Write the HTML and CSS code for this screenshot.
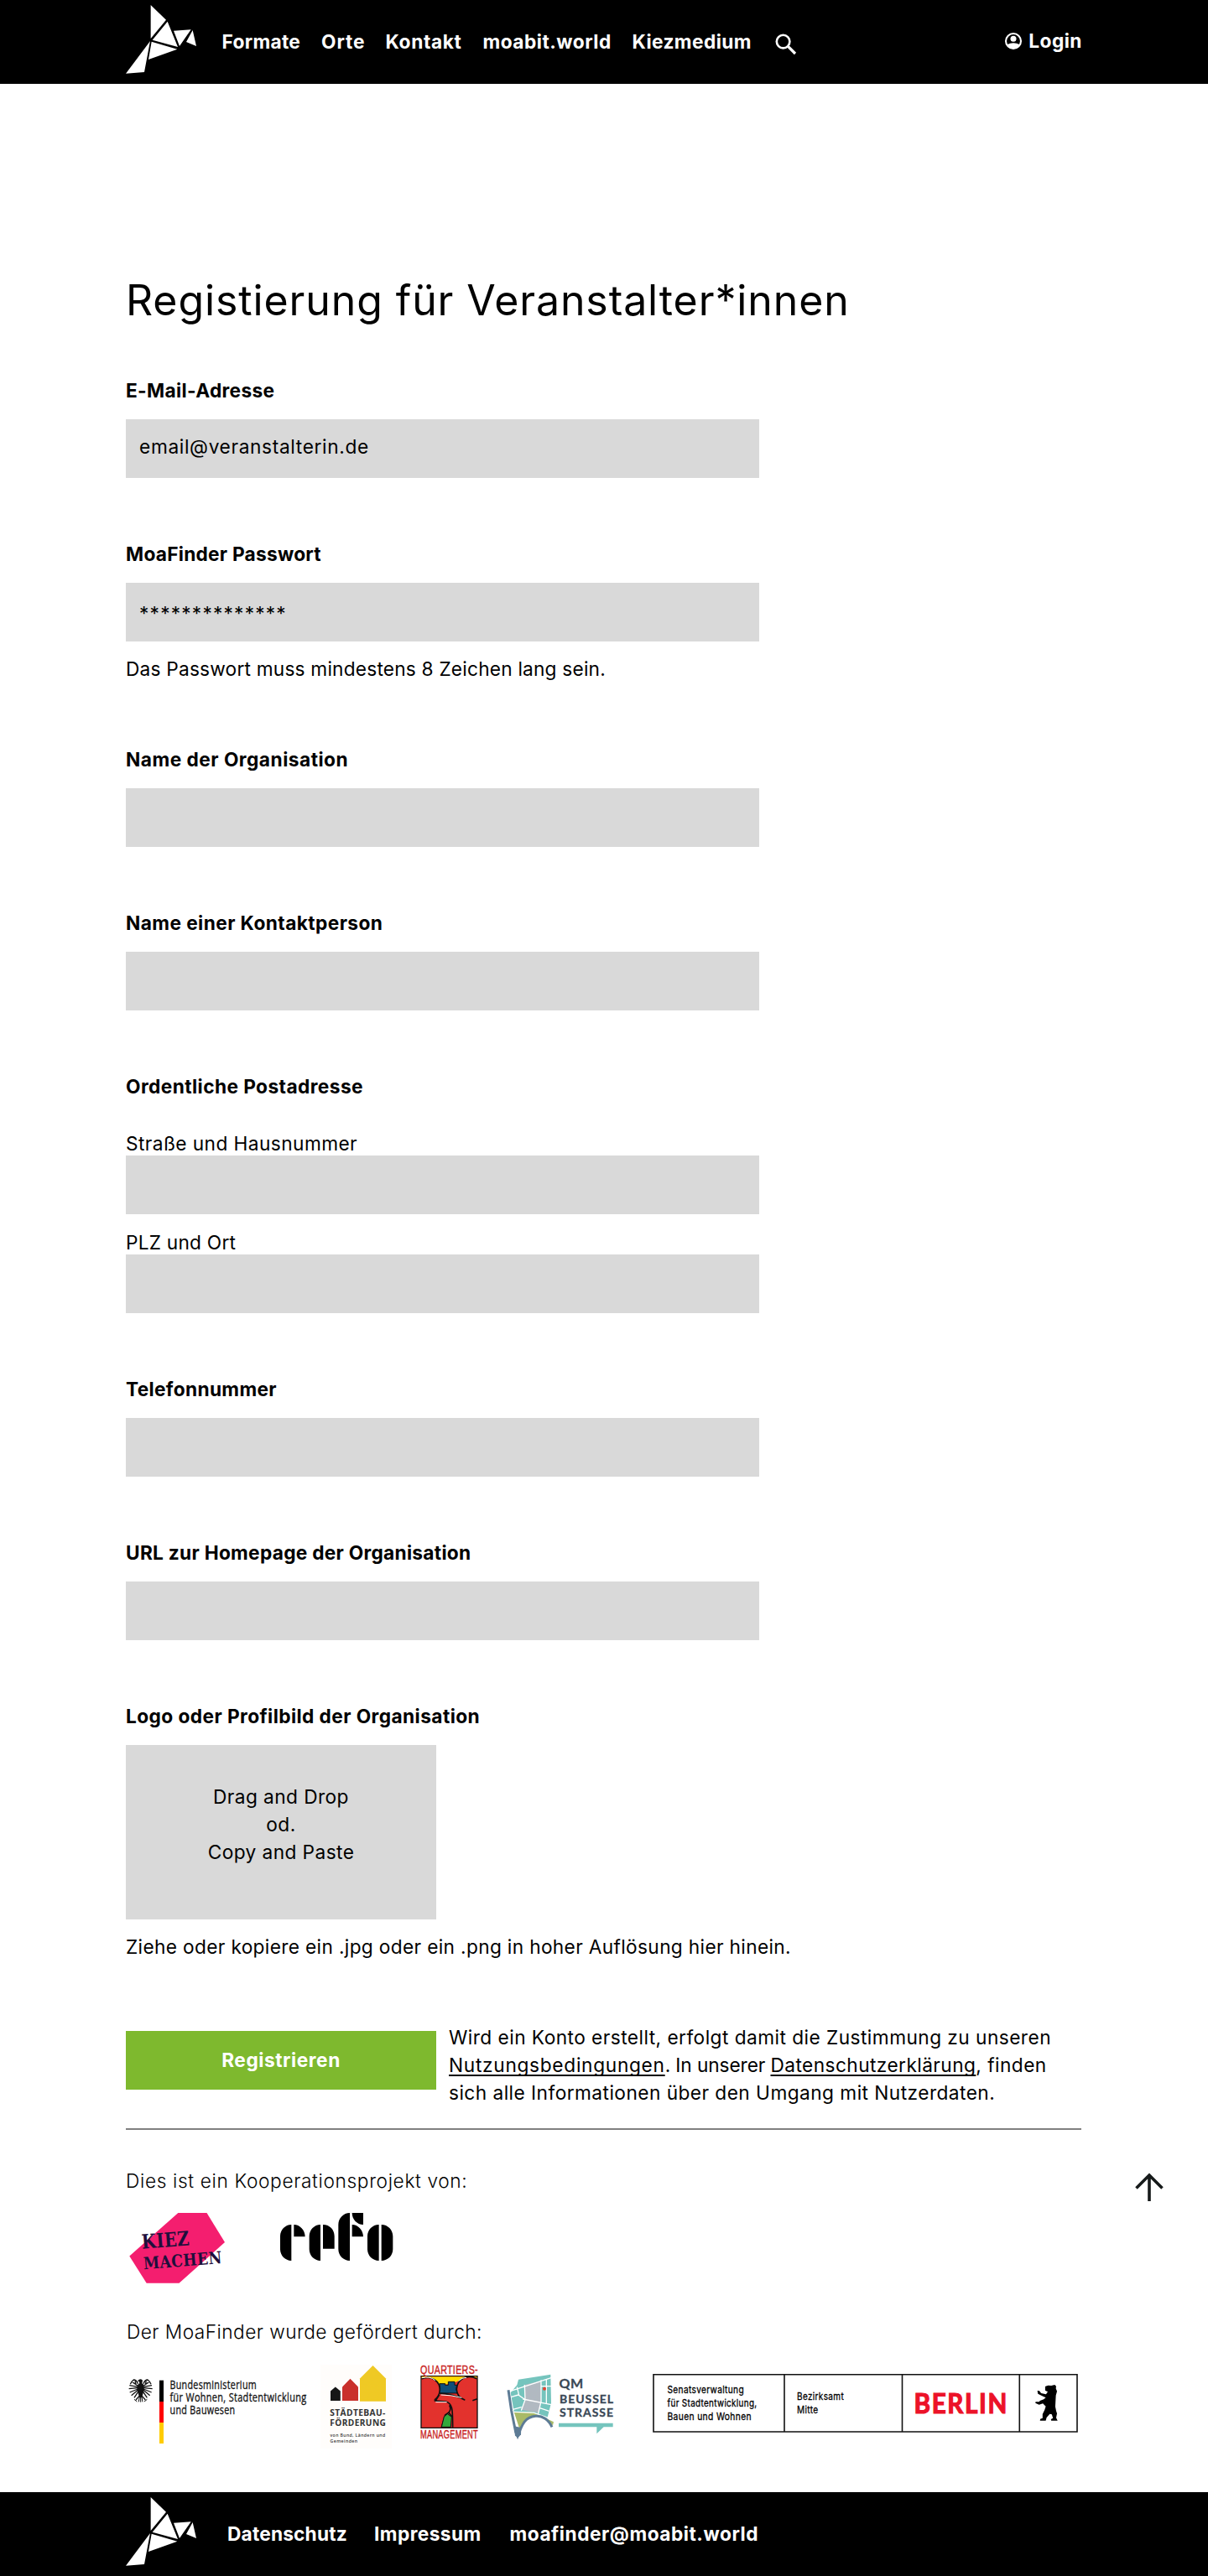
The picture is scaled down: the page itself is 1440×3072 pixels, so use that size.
FILE: index.html
```html
<!DOCTYPE html>
<html lang="de">
<head>
<meta charset="utf-8">
<title>MoaFinder – Registrierung</title>
<link rel="stylesheet" href="styles.css">
</head>
<body>
<svg class="defs" width="0" height="0" aria-hidden="true">
  <symbol id="bird" viewBox="60 0 255 300">
    <path fill="#fff" d="M149 18 204 71 149 138ZM209 77 246 168 155 143ZM231 110 293 106 252 165ZM299 108 312 165 276 150ZM152 149 244 176 141 213ZM147 147 126 258 60 263Z"/>
  </symbol>
</svg>

<header class="bar">
  <svg class="bird"><use href="#bird"/></svg>
  <nav class="nav">
    <a class="t-formate">Formate</a>
    <a class="t-orte">Orte</a>
    <a class="t-kontakt">Kontakt</a>
    <a class="t-world">moabit.world</a>
    <a>Kiezmedium</a>
    <svg class="search" viewBox="0 0 27 27" width="27" height="27"><g fill="none" stroke="#fff"><circle cx="10.6" cy="10.6" r="7.8" stroke-width="2.6"/><path d="M16.2 16.2 25 25" stroke-width="3.2"/></g></svg>
  </nav>
  <a class="login">
    <svg viewBox="0 0 22 22" width="22" height="22"><circle cx="11" cy="11" r="9" fill="none" stroke="#fff" stroke-width="2.1"/><circle cx="11" cy="8.2" r="3.5" fill="#fff"/><path fill="#fff" d="M3.2 15.2Q11 11.4 18.8 15.2L17 18.200Q11 22.500 5 18.200Z"/></svg>
    <span>Login</span>
  </a>
</header>

<main class="page">
  <h1>Registierung für Veranstalter*innen</h1>
  <form class="form">
    <section class="group">
      <h2 class="t-mail">E-Mail-Adresse</h2>
      <div class="field t-email">email@veranstalterin.de</div>
    </section>
    <section class="group">
      <h2 class="t-pass">MoaFinder Passwort</h2>
      <div class="field stars">**************</div>
      <p class="t-das">Das Passwort muss mindestens 8 Zeichen lang sein.</p>
    </section>
    <section class="group">
      <h2 class="t-org">Name der Organisation</h2>
      <div class="field"></div>
    </section>
    <section class="group">
      <h2>Name einer Kontaktperson</h2>
      <div class="field"></div>
    </section>
    <section class="group">
      <h2>Ordentliche Postadresse</h2>
      <div class="address">
        <label>Straße und Hausnummer</label>
        <div class="field"></div>
        <label class="t-plz">PLZ und Ort</label>
        <div class="field"></div>
      </div>
    </section>
    <section class="group">
      <h2 class="t-tel">Telefonnummer</h2>
      <div class="field"></div>
    </section>
    <section class="group">
      <h2 class="t-url">URL zur Homepage der Organisation</h2>
      <div class="field"></div>
    </section>
    <section class="group">
      <h2>Logo oder Profilbild der Organisation</h2>
      <div class="drop">Drag and Drop<br>od.<br>Copy and Paste</div>
      <p class="t-ziehe">Ziehe oder kopiere ein .jpg oder ein .png in hoher Auflösung hier hinein.</p>
    </section>
    <div class="submit">
      <div class="button">Registrieren</div>
      <p>Wird ein Konto erstellt, erfolgt damit die Zustimmung zu unseren<br><span class="t-line"><a class="t-nutz">Nutzungsbedingungen</a>. In unserer <a class="t-schutz">Datenschutzerklärung</a><span class="t-tail">, finden</span></span><br>sich alle Informationen über den Umgang mit Nutzerdaten.</p>
    </div>
  </form>

  <section class="credits">
    <p class="light t-dies">Dies ist ein Kooperationsprojekt von:</p>
    <div class="partners">
      <svg width="122" height="86" viewBox="150 2638 122 86">
        <path fill="#f41e6f" d="M212.300 2639H246.500L268 2674 213.500 2722.700H174.700L154.300 2690.500Z"/>
        <g fill="#1f0f3c" font-family="DejaVu Serif" font-weight="700">
          <text x="169.500" y="2681.800" font-size="23.500" textLength="57" lengthAdjust="spacingAndGlyphs" transform="rotate(-4.500 170 2681.500)">KIEZ</text>
          <text x="171.500" y="2706.300" font-size="20" textLength="94" lengthAdjust="spacingAndGlyphs" transform="rotate(-4.500 171.500 2706)">MACHEN</text>
        </g>
      </svg>
      <svg width="150" height="86" viewBox="325 2638 150 86">
        <g transform="translate(140 2620) scale(.33333)">
          <path d="M622 99C600 99 582 118 582 140V187C582 210 600 228 622 228ZM631 99C652 99 671 118 671 142H631ZM726 99C704 99 686 118 686 140V187C686 210 704 228 726 228ZM735 99C760 99 776 118 776 140V185H735ZM831 57C808 57 790 76 790 99V187C790 210 808 228 831 228ZM839 57H879V99C857 99 839 80 839 57ZM839 99C860 99 879 118 879 142H839ZM935 99C912 99 894 118 894 140V187C894 210 912 228 935 228ZM944 99C967 99 985 118 985 140V187C985 210 967 228 944 228Z"/>
        </g>
      </svg>
    </div>
    <p class="light t-der">Der MoaFinder wurde gefördert durch:</p>
    <div class="sponsors">
      <svg width="225" height="105" viewBox="150 2815 225 105">
        <g transform="translate(140 2760) scale(.33333)">
          <g fill="none" stroke="#111" stroke-width="4">
            <path d="M73 248Q68 234 58 234 50 240 46 250M93 248Q98 234 108 234 116 240 120 250M72 255 52 241M94 255 114 241M72 259 43 254M94 259 123 254M72 263 41 266M94 263 125 266M73 267 44 279M93 267 122 279M74 270 50 290M92 270 116 290M76 274 60 298M90 274 106 298M80 290 66 306M86 290 100 306M66 250 63 238M100 250 103 238"/>
            <path stroke-width="3" d="M60 304 70 312M106 304 96 312M83 288V314M80 288 76 313M86 288 90 313"/>
          </g>
          <path fill="#111" d="M72 239 77 233Q84 229 90 236L88 247Q98 252 95 270 92 284 87 298H79Q74 284 71 270 68 252 79 247L78 241Z"/>
          <path d="M150 236H165V312H150Z"/><path fill="#f00" d="M150 312H165V387H150Z"/><path fill="#fc0" d="M150 387H165V462H150Z"/>
        </g>
        <g font-family="Open Sans" font-size="13.800" fill="#111" stroke="#111" stroke-width=".3">
          <text x="202.500" y="2848.700" textLength="103.500" lengthAdjust="spacingAndGlyphs">Bundesministerium</text>
          <text x="202.500" y="2863.700" textLength="163" lengthAdjust="spacingAndGlyphs">für Wohnen, Stadtentwicklung</text>
          <text x="202.500" y="2878.900" textLength="78" lengthAdjust="spacingAndGlyphs">und Bauwesen</text>
        </g>
      </svg>
      <svg class="staedtebau" width="85" height="105" viewBox="382 2815 85 105">
        <path fill="#fffdfb" d="M382 2820H467V2920H382Z"/>
        <path fill="#161616" d="M394 2863V2851.500L399.800 2846.500 405.800 2851.500V2863Z"/>
        <path fill="#c9302c" d="M408 2863V2846.500L417.500 2836.800 427 2846.500V2863Z"/>
        <path fill="#efc924" d="M429 2863.700V2836.500L444.500 2821 460 2836.500V2863.700Z"/>
        <g fill="#333" font-family="Open Sans" font-weight="700" font-size="11">
          <text x="393.300" y="2881" textLength="66.500" lengthAdjust="spacingAndGlyphs">STÄDTEBAU-</text>
          <text x="393.300" y="2893" textLength="67" lengthAdjust="spacingAndGlyphs">FÖRDERUNG</text>
          <g font-size="5.500" font-weight="600"><text x="393.500" y="2905.500" textLength="66" lengthAdjust="spacingAndGlyphs">von Bund, Ländern und</text>
          <text x="393.500" y="2912.500" textLength="33" lengthAdjust="spacingAndGlyphs">Gemeinden</text></g>
        </g>
      </svg>
      <svg class="quartiers" width="76" height="105" viewBox="498 2815 76 105">
        <g transform="translate(480 2800) scale(.33333)">
          <path fill="#e3322d" stroke="#111" stroke-width="4" d="M66 101H267V286H66Z"/>
          <path fill="#fd0" d="M68 103H265V108Q238 97 215 110L190 122 160 130 130 134Q110 103 68 109Z"/>
          <path fill="#0f4f78" stroke="#111" stroke-width="3" d="M132 128H152V133H163V121H186V133H194Q188 150 196 162H130Q137 145 132 128Z"/>
          <path fill="#e3322d" stroke="#111" stroke-width="5" d="M68 111C105 97 133 120 133 150 132 168 120 182 113 187"/>
          <path fill="#e3322d" d="M68 113H92L113 187H68ZM150 166H205V200H170Z"/>
          <path fill="none" stroke="#111" stroke-width="5" d="M265 110C230 92 194 112 193 148 193 167 205 180 223 187M133 163Q170 163 210 180M113 189 155 192C181 200 178 225 179 284M117 190 131 168M267 182 250 188M167 205Q175 220 165 231L152 240 139 284M165 231 178 250"/>
          <path fill="#32a83c" stroke="#111" stroke-width="3" d="M139 283 148 246 160 236 175 247 172 283Z"/>
          <path fill="none" stroke="#fff" stroke-width="3" d="M69 107Q98 100 116 116M137 168Q170 168 211 178M200 118Q212 106 228 106M118 194H158"/>
        </g>
        <g fill="#c91f1f" stroke="#c91f1f" stroke-width=".4" font-family="Liberation Sans" font-size="14">
          <text x="501" y="2831.300" textLength="69" lengthAdjust="spacingAndGlyphs">QUARTIERS-</text>
          <text x="501" y="2907.700" textLength="69" lengthAdjust="spacingAndGlyphs">MANAGEMENT</text>
        </g>
      </svg>
      <svg class="beussel" width="135" height="105" viewBox="600 2815 135 105">
        <g transform="translate(480 2800) scale(.33333)">
          <path fill="#75c4bd" d="M414 113 529 95 531 197 517 252 460 230 398 228 386 160 409 133Z"/>
          <path fill="#b1b9c1" d="M436 132 494 118 494 192 487 232 424 222 438 185Z"/>
          <path fill="#a9ba67" d="M398 229 465 230 540 265 537 277 505 249Q450 232 418 290Z"/>
          <path fill="none" stroke="#fff" stroke-width="4" d="M384 155 531 107M409 140 416 170 438 185 424 224M436 132 438 184M495 115V192L484 238M387 176 414 168M430 183 531 203M514 112V198M495 137H531M394 220 425 212M398 229 470 232 520 250M488 214 524 226"/>
          <path fill="none" stroke="#5d7b95" stroke-width="9" d="M378 151 389 225 404 300 411 316C428 272 438 247 475 244 500 241 522 258 534 283"/>
          <path fill="#5d7b95" d="M398 280 424 285 423 310 413 321 402 314Z"/>
          <circle cx="507" cy="146" r="6" fill="#e6412f"/>
          <path fill="#75c4bd" d="M558 269H752V283H719L694 307V283H558Z"/>
        </g>
        <g fill="#3a4856" font-family="Lato" font-weight="700" stroke="#3a4856" stroke-width=".3">
          <text x="666.500" y="2848" font-size="16" textLength="29" lengthAdjust="spacingAndGlyphs">QM</text>
          <text x="667" y="2866" font-size="14" textLength="64.500" lengthAdjust="spacing">BEUSSEL</text>
          <text x="667" y="2882" font-size="14" textLength="64.500" lengthAdjust="spacing">STRASSE</text>
        </g>
      </svg>
      <svg class="berlin" width="511" height="105" viewBox="776 2815 511 105">
        <path fill="none" stroke="#111" stroke-width="1.600" d="M779 2831.800H1284V2900H779ZM935 2831.500V2899.800M1075.500 2831.500V2899.800M1215.300 2831.500V2899.800"/>
        <g font-family="Inter" font-size="11.800" fill="#000" stroke="#000" stroke-width=".3">
          <text x="795.500" y="2854" textLength="91.500" lengthAdjust="spacingAndGlyphs">Senatsverwaltung</text>
          <text x="795.500" y="2870" textLength="107" lengthAdjust="spacingAndGlyphs">für Stadtentwicklung,</text>
          <text x="795.500" y="2886" textLength="100.500" lengthAdjust="spacingAndGlyphs">Bauen und Wohnen</text>
          <text x="950" y="2862.300" textLength="56" lengthAdjust="spacingAndGlyphs">Bezirksamt</text>
          <text x="950" y="2878.300" textLength="25.500" lengthAdjust="spacingAndGlyphs">Mitte</text>
        </g>
        <text transform="translate(1089.500 2877.700) scale(.9 1)" font-family="Lato" font-weight="700" font-size="33" fill="#ec1228" stroke="#ec1228" stroke-width="1.200" textLength="123.500" lengthAdjust="spacing">BERLIN</text>
        <path transform="translate(760 2810) scale(.34437 .33333)" d="M1411 108 1421 104 1432 105 1444 102 1449 107 1448 115 1452 125 1448 140 1447 160 1446 180 1449 195 1452 205 1449 220 1454 230H1432L1431 225 1438 221 1434 208 1427 206 1416 219 1413 230H1393L1394 224 1402 221 1402 207 1409 192 1413 179 1403 169 1390 173 1377 167 1378 163 1390 163 1393 159 1406 154 1413 148 1399 141 1386 134 1384 123 1391 124 1397 132 1414 136 1420 127 1411 122Z"/>
      </svg>
    </div>
  </section>
</main>

<a class="to-top"><svg width="36" height="36" viewBox="0 0 36 36"><path fill="none" stroke="#161a1a" stroke-width="3.600" d="M18 34V4M2.500 18.500 18 3 33.500 18.500"/></svg></a>

<footer class="bar">
  <svg class="bird"><use href="#bird"/></svg>
  <nav class="nav footnav">
    <a class="t-daten">Datenschutz</a>
    <a>Impressum</a>
    <a class="t-addr">moafinder@moabit.world</a>
  </nav>
</footer>
</body>
</html>
```
FILE: styles.css
```css
* { box-sizing: border-box; }
body {
  margin: 0;
  position: relative;
  background: #fff;
  color: #000;
  font: 400 22.7px/33px Inter, "Liberation Sans", sans-serif;
  letter-spacing: 0.42px;
}
h1, h2, p { margin: 0; }
svg { display: block; flex: none; overflow: visible; }
.defs { position: absolute; }

.bar {
  display: flex;
  align-items: center;
  height: 100px;
  padding: 0 150px 0 150px;
  background: #000;
  color: #fff;
  font-weight: 700;
}
.bird { width: 85px; height: 100px; }
.nav {
  display: grid;
  grid-template-columns: 118.5px 76.5px 116px 178px 169px auto;
  margin-left: 29.5px;
  padding-bottom: 2px;
  white-space: nowrap;
}
.footnav { grid-template-columns: 175px 161.5px auto; margin-left: 36px; }
.search { margin-top: 6px; }
.login { display: flex; align-items: center; gap: 7px; margin-left: auto; padding-bottom: 3px; letter-spacing: 0.5px; }

.page { padding: 227px 150px 0; height: 2872px; }
h1 {
  margin-bottom: 61px;
  font-weight: 400;
  font-size: 50px;
  line-height: 62px;
  letter-spacing: 0.9px;
  white-space: nowrap;
}
h2 { padding-bottom: 2px; font-size: 22.7px; line-height: 31px; font-weight: 700; }
.form { display: flex; flex-direction: column; gap: 75px; }
.group { display: flex; flex-direction: column; gap: 17px; }
.group p { padding-bottom: 2px; line-height: 31px; }
.field { width: 755px; height: 70px; padding: 16px; background: #d9d9d9; }
.stars { padding-top: 20px; letter-spacing: 1.2px; }
.address { padding-top: 18px; }
.address label { display: block; height: 30px; line-height: 31px; }
.address .field + label { margin-top: 18px; }
.drop { width: 370px; height: 208px; padding-top: 45px; background: #d9d9d9; text-align: center; }
.submit { display: flex; gap: 15px; white-space: nowrap; }
.submit p { margin: -1px 0 1px; letter-spacing: 0.45px; }
.button {
  width: 370px;
  height: 70px;
  margin-top: 8px;
  background: #7eb92e;
  color: #fff;
  font-weight: 700;
  line-height: 70px;
  letter-spacing: 0.55px;
  text-align: center;
}
.submit a { text-decoration: underline; text-decoration-thickness: 1.5px; text-underline-offset: 3px; text-decoration-skip-ink: none; }

.credits { margin-top: 25px; padding-top: 44px; border-top: 2px solid #808080; width: 1139px; }
.light { font-weight: 300; }
.partners { display: flex; gap: 53px; margin-top: 21px; }
.t-der { margin: 40px 0 0 1px; }
.sponsors { display: flex; margin-top: 18px; }
.staedtebau { margin-left: 7px; }
.quartiers { margin-left: 31px; }
.beussel { margin-left: 26px; }
.berlin { margin-left: 41px; }
.to-top { position: absolute; left: 1352px; top: 2591px; }

/* Tracking per text */
.t-formate { letter-spacing: 0.32px; }
.t-orte { letter-spacing: 0.9px; }
.t-kontakt { letter-spacing: 0.65px; }
.t-world { letter-spacing: 0.5px; }
.t-mail { letter-spacing: 0.33px; }
.t-email { letter-spacing: 0.65px; }
.t-pass { letter-spacing: 0.25px; }
.t-das { letter-spacing: 0.2px; }
.t-org { letter-spacing: 0.49px; }
.t-tel { letter-spacing: 0.33px; }
.t-url { letter-spacing: 0.28px; }
.t-plz { letter-spacing: 0.22px; }
.t-ziehe { letter-spacing: 0.34px; }
.t-line { letter-spacing: -0.1px; }
.t-nutz { letter-spacing: 0.7px; }
.t-schutz { letter-spacing: 0.42px; }
.t-tail { letter-spacing: 0.45px; }
.t-dies { letter-spacing: 0.64px; }
.t-der { letter-spacing: 0.45px; }
.t-daten { letter-spacing: 0.18px; }
.t-addr { letter-spacing: 0.53px; }
```
